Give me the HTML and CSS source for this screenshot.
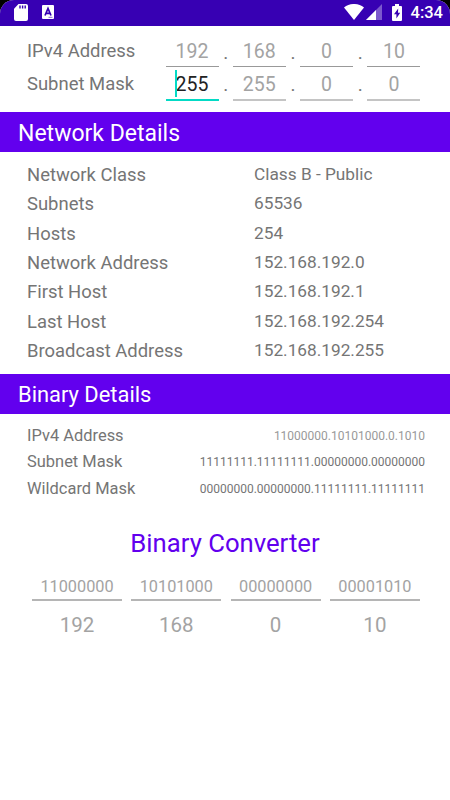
FILE: index.html
```
<!DOCTYPE html>
<html lang="en">
<head>
<meta charset="utf-8">
<title>Subnet Calculator</title>
<link rel="stylesheet" href="styles.css">
</head>
<body>
<div class="screen">
  <header class="status">
    <svg class="sd" width="14" height="17" viewBox="0 0 14 17"><path fill="#fff" d="M4.5 0H12a2 2 0 0 1 2 2v13a2 2 0 0 1-2 2H2a2 2 0 0 1-2-2V4.800z"/><path stroke="#3700b3" stroke-width="1.400" d="M6 1.500v3M8.600 1.500v3M11.200 1.500v3"/></svg>
    <svg class="kb" width="12" height="14" viewBox="0 0 12 14"><rect width="12" height="14" rx="1" fill="#fff"/><path fill="none" stroke="#3700b3" stroke-width="1.700" d="M3 10.500 6 3.500l3 7M4 8.300h4"/><path stroke="#3700b3" stroke-width=".6" d="M6.500 12.300h4"/></svg>
    <svg class="wifi" width="20" height="16" viewBox="0 0 20 16"><path fill="#fff" d="M10 16 0 3.500C5.800-1.200 14.200-1.200 20 3.500z"/></svg>
    <svg class="cell" width="16" height="16" viewBox="0 0 16 16"><path fill="#fff" fill-opacity=".35" d="M0 16 16 0v16z"/><path fill="#fff" d="M0 16 10 6v10z"/></svg>
    <svg class="battery" width="10" height="17" viewBox="0 0 10 17"><path fill="#fff" d="M3 0h4v2h2a1 1 0 0 1 1 1v13a1 1 0 0 1-1 1H1a1 1 0 0 1-1-1V3a1 1 0 0 1 1-1h2z"/><path fill="#3700b3" d="M6.200 4.500 2 10.200h2.400V14.500L8.200 8.800H6z"/></svg>
    <span class="clock">4:34</span>
  </header>
  <main>
    <section class="inputs">
      <div class="address">
        <span class="label">IPv4 Address</span>
        <span class="octet">192</span><span class="dot">.</span><span class="octet">168</span><span class="dot">.</span><span class="octet">0</span><span class="dot">.</span><span class="octet">10</span>
      </div>
      <div class="address mask">
        <span class="label">Subnet Mask</span>
        <span class="octet active"><span class="typed">255</span></span><span class="dot">.</span><span class="octet">255</span><span class="dot">.</span><span class="octet">0</span><span class="dot">.</span><span class="octet">0</span>
      </div>
    </section>
    <h2 class="bar">Network Details</h2>
    <dl class="network">
      <dt>Network Class</dt><dd>Class B - Public</dd>
      <dt>Subnets</dt><dd>65536</dd>
      <dt>Hosts</dt><dd>254</dd>
      <dt>Network Address</dt><dd>152.168.192.0</dd>
      <dt>First Host</dt><dd>152.168.192.1</dd>
      <dt>Last Host</dt><dd>152.168.192.254</dd>
      <dt>Broadcast Address</dt><dd>152.168.192.255</dd>
    </dl>
    <h2 class="bar small">Binary Details</h2>
    <dl class="binary">
      <dt>IPv4 Address</dt><dd class="hint">11000000.10101000.0.1010</dd>
      <dt>Subnet Mask</dt><dd>11111111.11111111.00000000.00000000</dd>
      <dt>Wildcard Mask</dt><dd>00000000.00000000.11111111.11111111</dd>
    </dl>
    <h3 class="title">Binary Converter</h3>
    <div class="converter">
      <span class="bits">11000000</span><span class="bits">10101000</span><span class="bits">00000000</span><span class="bits">00001010</span>
      <span class="value">192</span><span class="value">168</span><span class="value">0</span><span class="value">10</span>
    </div>
  </main>
</div>
</body>
</html>
```
FILE: styles.css
```
* { box-sizing: border-box; }
body { margin: 0; background: #000; font-family: Roboto, sans-serif; color: #757575; }
.screen { width: 450px; height: 800px; overflow: hidden; background: #fff; border-radius: 14px 14px 0 0; }
.status { display: flex; height: 25.500px; padding: 4px 7px 0 14px; background: #3700b3; }
.kb { margin: 1px 0 0 14px; }
.wifi { margin-left: auto; }
.cell { margin-left: 2px; }
.battery { margin-left: 10px; }
.clock { margin-left: 9px; color: #fff; font-size: 16.500px; line-height: 18px; font-weight: 500; }
.inputs { height: 86px; padding-left: 27px; }
.address { display: grid; grid-template-columns: 138.500px 53px 14.300px 53px 14.300px 53px 14.300px 53px; height: 41px; }
.mask { height: 34.500px; }
.label { align-self: end; line-height: 22px; margin-bottom: 5px; font-size: 18.450px; }
.mask .label { margin-bottom: 6px; }
.octet { align-self: end; height: 27px; border-bottom: 1px solid #999; text-align: center; font-size: 19.500px; line-height: 24px; color: #a3a3a3; }
.mask .octet { border-bottom: 2px solid #c4c4c4; height: 29px; line-height: 26px; }
.mask .active { border-bottom: 2px solid #03dac5; color: #222; }
.typed { position: relative; }
.typed::before { content: ""; position: absolute; left: -1px; top: -3px; width: 2px; height: 27px; background: #03dac5; }
.dot { align-self: end; text-align: center; font-size: 19px; line-height: 28px; }
.mask .dot { line-height: 32px; }
.bar { margin: 0; height: 40.500px; padding-left: 18px; background: #6200ee; color: #fff; font-weight: 400; font-size: 23px; line-height: 43px; }
.small { font-size: 21.900px; height: 40px; line-height: 42px; }
dl, dd { margin: 0; }
.network { display: grid; grid-template-columns: 227px 1fr; grid-auto-rows: 29.350px; height: 221.500px; padding: 8px 0 0 27px; font-size: 18.450px; line-height: 30.500px; }
.network dd { font-size: 17.250px; line-height: 29.350px; }
.binary { display: grid; grid-template-columns: 140px 1fr; grid-auto-rows: 26.800px; height: 107px; padding: 8px 25px 0 27px; font-size: 16.450px; line-height: 28.500px; }
.binary dd { font-size: 12px; text-align: right; line-height: 29px; }
.binary .hint { color: #999; }
.title { margin: 0; font-weight: 400; font-size: 25.700px; line-height: 44px; color: #6200ee; text-align: center; }
.converter { display: grid; grid-template-columns: repeat(4, 90px); column-gap: 9.300px; padding: 9px 0 0 32px; text-align: center; color: #a3a3a3; }
.bits { height: 27px; border-bottom: 2px solid #b5b5b5; font-size: 16.300px; line-height: 26px; }
.value { font-size: 20.500px; line-height: 48px; }
```
